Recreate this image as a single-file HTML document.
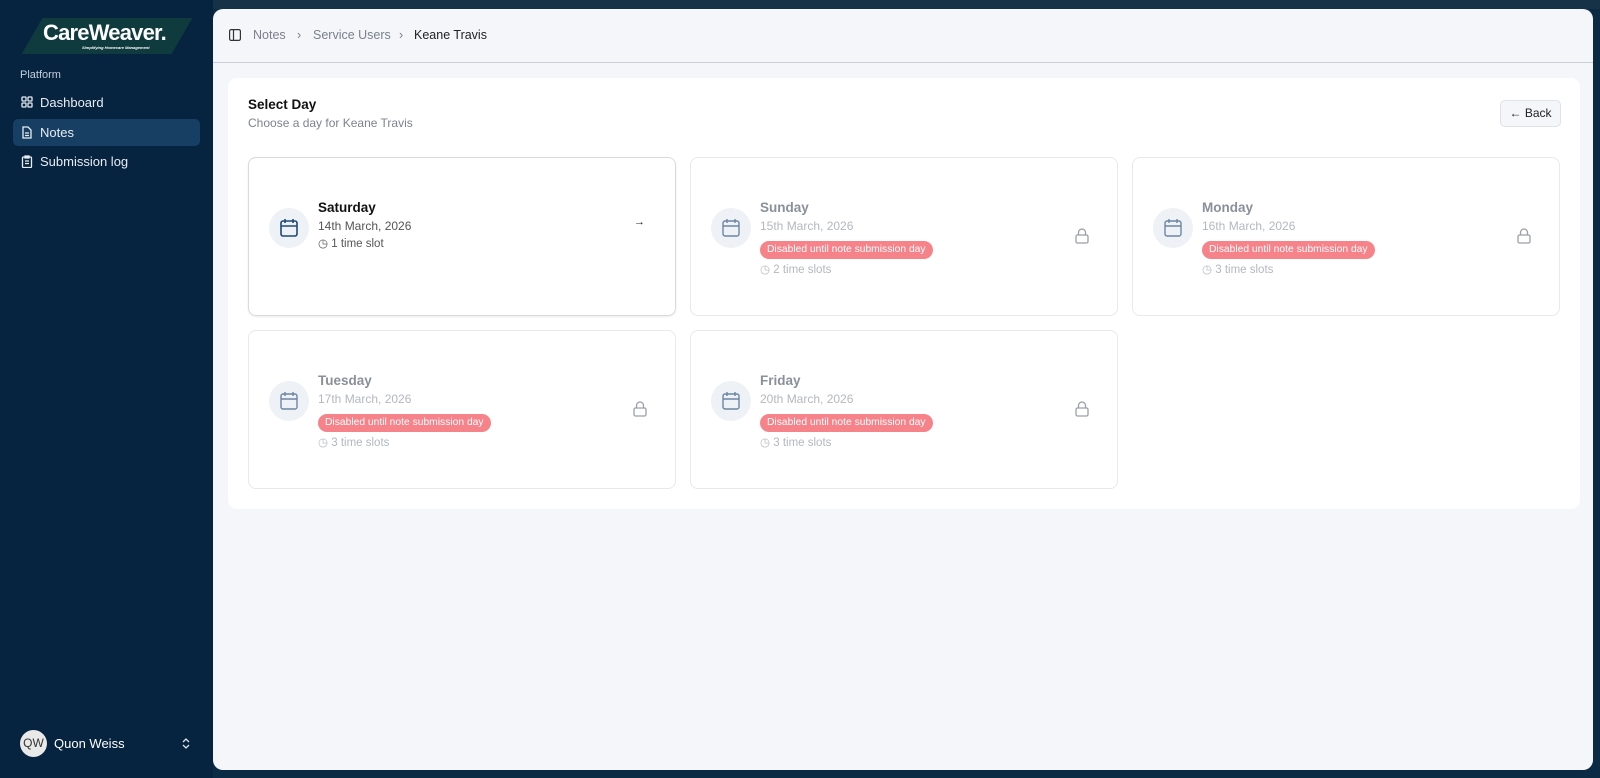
<!DOCTYPE html>
<html><head><meta charset="utf-8"><style>
*{box-sizing:border-box;margin:0;padding:0}
body{width:1600px;height:778px;background:#0b2a44;font-family:"Liberation Sans",sans-serif;position:relative;overflow:hidden}
.side{position:absolute;left:0;top:0;width:213px;height:778px;background:#06233f}
.frame{position:absolute;left:0;top:0;width:1600px;height:9px;background:#163246}
.logo{position:absolute;left:32px;top:18px;width:150px;height:36px;background:#0f3a3e;transform:skewX(-30deg)}
.logot{position:absolute;left:43px;top:20px;color:#fff;font-weight:bold;font-size:22px;letter-spacing:-0.8px}
.logos{position:absolute;left:82px;top:45px;color:#fff;font-size:4px;font-style:italic;font-weight:bold}
.plat{position:absolute;left:20px;top:69px;color:#c5cfd9;font-size:11px}
.nav{position:absolute;left:13px;width:187px;height:27px;color:#e8edf2;font-size:13px;padding-left:27px;line-height:27px;border-radius:5px}
.nav svg{position:absolute;left:8px;top:7px}
.main{position:absolute;left:213px;top:9px;width:1380px;height:761px;background:#f4f6fa;border-radius:10px}
.hdr{position:absolute;left:0;top:0;width:100%;height:54px;border-bottom:1.5px solid #c9ced6}
.crumb{position:absolute;top:19px;font-size:12.5px;color:#7a818c}
.card{position:absolute;left:15px;top:69px;width:1352px;height:431px;background:#fff;border-radius:9px}
.t1{position:absolute;left:20px;top:19px;font-size:13.5px;font-weight:bold;color:#111}
.t2{position:absolute;left:20px;top:38px;font-size:12px;color:#7c838e}
.back{position:absolute;left:1272px;top:22px;width:61px;height:27px;border:1px solid #dfe3e8;background:#f4f6f9;border-radius:5px;font-size:12px;color:#222;text-align:center;line-height:25px}
.day{position:absolute;width:428px;height:160px;border:1px solid #e6e9ed;border-radius:8px;background:#fff}
.day.act{border-color:#d7dbe0;box-shadow:0 1px 2px rgba(0,0,0,.08)}
.ic{position:absolute;left:20px;top:50px;width:40px;height:40px;border-radius:50%;background:#eef1f5}
.ic svg{position:absolute;left:11px;top:10px}
.nm{position:absolute;left:69px;font-size:13.5px;font-weight:bold;color:#111}
.dt{position:absolute;left:69px;font-size:12px;color:#555}
.sl{position:absolute;left:69px;font-size:11.5px;color:#555}
.dis .nm{color:#8a9099}.dis .dt,.dis .sl{color:#b3b8bf}
.badge{position:absolute;left:69px;top:83px;height:18px;padding:0 7px;background:#f6838a;color:#fff;border-radius:9px;font-size:10.3px;line-height:18px}
.lock{position:absolute;right:28px;top:70px}
</style></head><body>
<div class="frame"></div>
<div class="side">
<div class="logo"></div><div class="logot">CareWeaver.</div><div class="logos">Simplifying Homecare Management</div>
<div class="plat">Platform</div>
<div class="nav" style="top:89px"><svg width="12" height="12" viewBox="0 0 12 12" fill="none" stroke="#e8edf2" stroke-width="1.3"><rect x="1" y="1" width="4" height="4" rx=".6"/><rect x="7" y="1" width="4" height="4" rx=".6"/><rect x="1" y="7" width="4" height="4" rx=".6"/><rect x="7" y="7" width="4" height="4" rx=".6"/></svg>Dashboard</div>
<div class="nav" style="top:119px;background:#173f63"><svg width="12" height="13" viewBox="0 0 12 13" fill="none" stroke="#e8edf2" stroke-width="1.3"><path d="M2 1h5l3 3v8H2z"/><path d="M4 7h4M4 9.5h4"/></svg>Notes</div>
<div class="nav" style="top:148px"><svg width="12" height="13" viewBox="0 0 12 13" fill="none" stroke="#e8edf2" stroke-width="1.3"><rect x="1.5" y="2" width="9" height="10.5" rx="1"/><path d="M4 1h4v2H4zM4 6h4M4 8.5h4"/></svg>Submission log</div>
<div style="position:absolute;left:20px;top:730px;width:27px;height:27px;border-radius:50%;background:#e9e9e9;color:#333;font-size:12px;text-align:center;line-height:27px">QW</div>
<div style="position:absolute;left:54px;top:736px;color:#fff;font-size:13px">Quon Weiss</div>
<svg style="position:absolute;left:182px;top:737px" width="8" height="13" viewBox="0 0 8 13" fill="none" stroke="#dfe5ea" stroke-width="1.3"><path d="M1 5l3-3 3 3M1 8l3 3 3-3"/></svg>
</div>
<div class="main">
<div class="hdr">
<svg style="position:absolute;left:16px;top:20px" width="12" height="12" viewBox="0 0 12 12" fill="none" stroke="#333" stroke-width="1.2"><rect x=".6" y=".6" width="10.8" height="10.8" rx="1.5"/><path d="M4.5 1v10"/></svg>
<span class="crumb" style="left:40px">Notes</span><span class="crumb" style="left:84px">›</span>
<span class="crumb" style="left:100px">Service Users</span><span class="crumb" style="left:186px">›</span>
<span class="crumb" style="left:201px;color:#222">Keane Travis</span>
</div>
<div class="card">
<div class="t1">Select Day</div><div class="t2">Choose a day for Keane Travis</div>
<div class="back">← Back</div>
</div>
</div>
<div style="position:absolute;left:0;top:0">
<div class="day act" style="left:248px;top:157px;height:159px">
<div class="ic"><svg width="18" height="20" viewBox="0 0 18 20" fill="none" stroke="#1d4a78" stroke-width="1.6"><rect x="1" y="3" width="16" height="15" rx="2"/><path d="M1 8h16M5 1v4M13 1v4"/></svg></div>
<div class="nm" style="top:42px">Saturday</div><div class="dt" style="top:61px">14th March, 2026</div><div class="sl" style="top:78px">◷ 1 time slot</div>
<div style="position:absolute;right:30px;top:58px;font-size:11px;color:#222">→</div>
</div>
<div class="day dis" style="left:690px;top:157px;height:159px">
<div class="ic"><svg width="18" height="20" viewBox="0 0 18 20" fill="none" stroke="#6c86a4" stroke-width="1.4"><rect x="1" y="3" width="16" height="15" rx="2"/><path d="M1 8h16M5 1v4M13 1v4"/></svg></div>
<div class="nm" style="top:42px">Sunday</div><div class="dt" style="top:61px">15th March, 2026</div><div class="badge">Disabled until note submission day</div><div class="sl" style="top:104px">◷ 2 time slots</div>
<svg class="lock" width="14" height="16" viewBox="0 0 14 16" fill="none" stroke="#9aa0a8" stroke-width="1.3"><rect x="1" y="7" width="12" height="8" rx="1.5"/><path d="M3.5 7V4.5a3.5 3.5 0 0 1 7 0V7"/></svg>
</div>
<div class="day dis" style="left:1132px;top:157px;height:159px">
<div class="ic"><svg width="18" height="20" viewBox="0 0 18 20" fill="none" stroke="#6c86a4" stroke-width="1.4"><rect x="1" y="3" width="16" height="15" rx="2"/><path d="M1 8h16M5 1v4M13 1v4"/></svg></div>
<div class="nm" style="top:42px">Monday</div><div class="dt" style="top:61px">16th March, 2026</div><div class="badge">Disabled until note submission day</div><div class="sl" style="top:104px">◷ 3 time slots</div>
<svg class="lock" width="14" height="16" viewBox="0 0 14 16" fill="none" stroke="#9aa0a8" stroke-width="1.3"><rect x="1" y="7" width="12" height="8" rx="1.5"/><path d="M3.5 7V4.5a3.5 3.5 0 0 1 7 0V7"/></svg>
</div>
<div class="day dis" style="left:248px;top:330px;height:159px">
<div class="ic"><svg width="18" height="20" viewBox="0 0 18 20" fill="none" stroke="#6c86a4" stroke-width="1.4"><rect x="1" y="3" width="16" height="15" rx="2"/><path d="M1 8h16M5 1v4M13 1v4"/></svg></div>
<div class="nm" style="top:42px">Tuesday</div><div class="dt" style="top:61px">17th March, 2026</div><div class="badge">Disabled until note submission day</div><div class="sl" style="top:104px">◷ 3 time slots</div>
<svg class="lock" width="14" height="16" viewBox="0 0 14 16" fill="none" stroke="#9aa0a8" stroke-width="1.3"><rect x="1" y="7" width="12" height="8" rx="1.5"/><path d="M3.5 7V4.5a3.5 3.5 0 0 1 7 0V7"/></svg>
</div>
<div class="day dis" style="left:690px;top:330px;height:159px">
<div class="ic"><svg width="18" height="20" viewBox="0 0 18 20" fill="none" stroke="#6c86a4" stroke-width="1.4"><rect x="1" y="3" width="16" height="15" rx="2"/><path d="M1 8h16M5 1v4M13 1v4"/></svg></div>
<div class="nm" style="top:42px">Friday</div><div class="dt" style="top:61px">20th March, 2026</div><div class="badge">Disabled until note submission day</div><div class="sl" style="top:104px">◷ 3 time slots</div>
<svg class="lock" width="14" height="16" viewBox="0 0 14 16" fill="none" stroke="#9aa0a8" stroke-width="1.3"><rect x="1" y="7" width="12" height="8" rx="1.5"/><path d="M3.5 7V4.5a3.5 3.5 0 0 1 7 0V7"/></svg>
</div>
</div>
</body></html>
